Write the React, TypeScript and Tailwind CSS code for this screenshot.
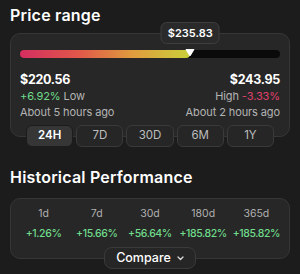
import React from "react";

const periods = ["24H", "7D", "30D", "6M", "1Y"];
const perf = [
  { k: "1d", v: "+1.26%" },
  { k: "7d", v: "+15.66%" },
  { k: "30d", v: "+56.64%" },
  { k: "180d", v: "+185.82%" },
  { k: "365d", v: "+185.82%" },
];

export default function App() {
  return (
    <div
      className="w-[300px] h-[274px] bg-[#1c1c1c] px-[10px] pt-[4px] text-white overflow-hidden"
      style={{ fontFamily: "Inter, 'Noto Sans', sans-serif" }}
    >
      <h2 className="text-[16px] font-semibold leading-[22px] tracking-[0.2px]">Price range</h2>

      <div className="mt-[7px] rounded-[10px] border border-[#363636] bg-[#272727] px-[9px] pt-[16px] pb-[16px]">
        <div className="relative h-[8px] rounded-full bg-[#0a0a0a]">
          <div
            className="absolute left-0 top-0 h-[8px] rounded-full"
            style={{
              width: "65.5%",
              background: "linear-gradient(90deg,#d42e60 0%,#e0584a 35%,#e09a3e 65%,#c9d03a 100%)",
            }}
          />
          <div className="absolute left-[65.5%] -top-[2px] -translate-x-1/2">
            <svg width="10" height="9" viewBox="0 0 10 9">
              <path d="M1.2 1 L8.8 1 Q9.8 1 9.2 2 L5.8 7.6 Q5 8.6 4.2 7.6 L0.8 2 Q0.2 1 1.2 1 Z" fill="#fff" />
            </svg>
          </div>
          <div className="absolute left-[65.5%] -top-[28px] -translate-x-1/2 h-[22px] px-[6px] flex items-center rounded-[6px] border border-[#3e3e3e] bg-[#2a2a2a] text-[11px] font-semibold whitespace-nowrap">
            $235.83
          </div>
        </div>

        <div className="mt-[14px] flex justify-between text-[11px] leading-[16px] tracking-[-0.1px]">
          <div>
            <div className="text-[12.5px] font-bold tracking-[-0.3px]">$220.56</div>
            <div>
              <span className="text-[#6fdc8c]">+6.92%</span>
              <span className="text-[#b4b4b4]"> Low</span>
            </div>
            <div className="text-[#b4b4b4]">About 5 hours ago</div>
          </div>
          <div className="text-right">
            <div className="text-[12.5px] font-bold tracking-[-0.3px]">$243.95</div>
            <div>
              <span className="text-[#b4b4b4]">High </span>
              <span className="text-[#e0406e]">-3.33%</span>
            </div>
            <div className="text-[#b4b4b4]">About 2 hours ago</div>
          </div>
        </div>
      </div>

      <div className="-mt-[12px] mx-[16px] flex gap-[3px]">
        {periods.map((p, i) => (
          <div
            key={p}
            className={
              i === 0
                ? "flex-1 h-[22px] flex items-center justify-center rounded-[6px] border border-[#1c1c1c] bg-[#363636] text-[11.5px] font-semibold text-white"
                : "flex-1 h-[22px] flex items-center justify-center rounded-[6px] border border-[#3a3a3a] bg-[#262626] text-[11.5px] text-[#bdbdbd]"
            }
          >
            {p}
          </div>
        ))}
      </div>

      <h2 className="mt-[19px] text-[16px] font-semibold leading-[22px] tracking-[0.2px]">Historical Performance</h2>

      <div className="mt-[10px] rounded-[10px] border border-[#363636] bg-[#272727] px-[6px] pt-[7px] pb-[16px]">
        <div className="grid grid-cols-5 text-center text-[10.5px] leading-[16px]">
          {perf.map((c) => (
            <div key={c.k} className="flex flex-col gap-[4px]">
              <span className="text-[#b0b0b0]">{c.k}</span>
              <span className="text-[#6fdc8c] font-medium tracking-[-0.4px]">{c.v}</span>
            </div>
          ))}
        </div>
      </div>

      <div className="-mt-[12px] flex justify-center">
        <div className="h-[22px] w-[92px] flex items-center justify-center gap-[6px] rounded-[8px] border border-[#3a3a3a] bg-[#262626] text-[12.5px] font-medium">
          Compare
          <svg width="7" height="5" viewBox="0 0 7 5">
            <path d="M1 1 L3.5 3.5 L6 1" stroke="#ddd" strokeWidth="1.3" fill="none" strokeLinecap="round" strokeLinejoin="round" />
          </svg>
        </div>
      </div>
    </div>
  );
}
